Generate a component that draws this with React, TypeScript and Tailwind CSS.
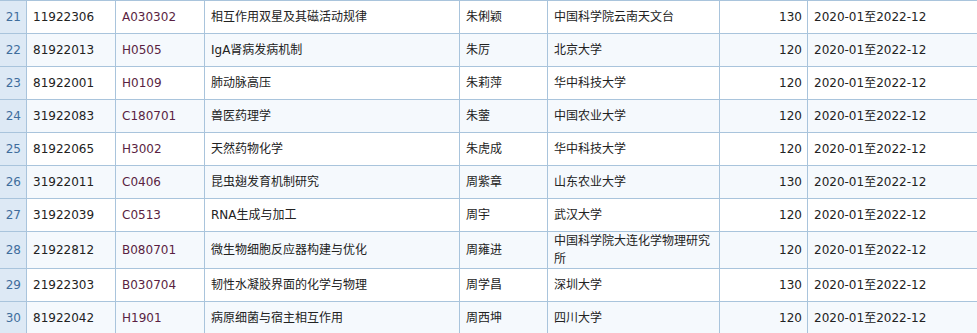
const rows: [number, string, string, string, string, string, number][] = [
  [21, "11922306", "A030302", "相互作用双星及其磁活动规律", "朱俐颖", "中国科学院云南天文台", 130],
  [22, "81922013", "H0505", "IgA肾病发病机制", "朱厉", "北京大学", 120],
  [23, "81922001", "H0109", "肺动脉高压", "朱莉萍", "华中科技大学", 120],
  [24, "31922083", "C180701", "兽医药理学", "朱蓥", "中国农业大学", 120],
  [25, "81922065", "H3002", "天然药物化学", "朱虎成", "华中科技大学", 120],
  [26, "31922011", "C0406", "昆虫翅发育机制研究", "周紫章", "山东农业大学", 130],
  [27, "31922039", "C0513", "RNA生成与加工", "周宇", "武汉大学", 120],
  [28, "21922812", "B080701", "微生物细胞反应器构建与优化", "周雍进", "中国科学院大连化学物理研究所", 120],
  [29, "21922303", "B030704", "韧性水凝胶界面的化学与物理", "周学昌", "深圳大学", 130],
  [30, "81922042", "H1901", "病原细菌与宿主相互作用", "周西坤", "四川大学", 120],
];

export default function App() {
  return (
    <div className="w-[977px] h-[333px] overflow-hidden bg-white">
      <table
        className="table-fixed border-separate border-spacing-0 w-[977px] text-[12px] leading-[18px] text-[#222222] border-t border-[#a9c4dc]"
        style={{ fontFamily: '"DejaVu Sans", "Noto Sans CJK SC", sans-serif' }}
      >
        <colgroup>
          <col className="w-[27px]" />
          <col className="w-[89px]" />
          <col className="w-[89px]" />
          <col className="w-[255px]" />
          <col className="w-[88px]" />
          <col className="w-[172px]" />
          <col className="w-[88px]" />
          <col className="w-[169px]" />
        </colgroup>
        <tbody>
          {rows.map(([n, id, code, title, name, org, amt], i) => {
            const bg = i % 2 === 0 ? "bg-white" : "bg-[#f5f9fd]";
            const cell = `h-[33px] border-b border-r border-[#a9c4dc] align-middle pl-[6px] pr-[5px] py-0 ${bg}`;
            return (
              <tr key={n}>
                <td className="h-[33px] border-b border-r border-[#a9c4dc] align-middle pr-[5px] pl-0 text-right bg-[#dde9f5] text-[#3f6d9c]">
                  {n}
                </td>
                <td className={cell}>{id}</td>
                <td className={`${cell} text-[#5a1f42]`}>{code}</td>
                <td className={cell}>{title}</td>
                <td className={cell}>{name}</td>
                <td className={cell}>{org}</td>
                <td className={`${cell} text-right`}>{amt}</td>
                <td className={`h-[33px] border-b border-[#a9c4dc] align-middle pl-[6px] pr-[5px] py-0 ${bg}`}>
                  2020-01至2022-12
                </td>
              </tr>
            );
          })}
        </tbody>
      </table>
    </div>
  );
}
